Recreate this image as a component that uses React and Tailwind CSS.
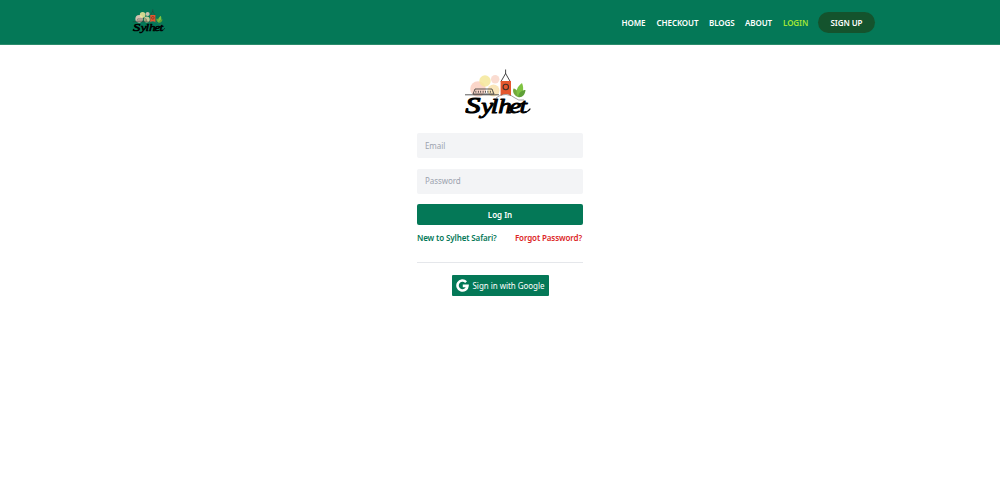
import React from "react";

function Logo({ className }) {
  return (
    <svg viewBox="0 0 66 53" className={className} role="img" aria-label="Sylhet">
      <circle cx="13" cy="20" r="7.8" fill="#f9cfc0" fillOpacity="0.85" />
      <circle cx="20" cy="12" r="5.7" fill="#f5e79a" fillOpacity="0.85" />
      <circle cx="30.2" cy="10.2" r="4.2" fill="#f9d3c6" fillOpacity="0.8" />
      <circle cx="28.5" cy="21.5" r="6" fill="#f8dfa8" fillOpacity="0.8" />
      <path d="M0 25.8H34M10 20H27L29 25H8Z" fill="none" stroke="#333" strokeWidth="0.8" />
      <path d="M10.5 22.7H27.5" stroke="#333" strokeWidth="2" strokeDasharray="0.8 1.6" />
      <path d="M36 12.5L40.6 4.5L45.2 12.5M40.6 0.5V5" fill="none" stroke="#333" strokeWidth="0.9" />
      <path d="M35.6 12H46V27Q40.8 23 35.6 27Z" fill="#e4572e" />
      <circle cx="40.8" cy="18" r="2.7" fill="#e4572e" stroke="#443028" strokeWidth="1.1" />
      <path d="M53 28C48 26 47.5 22 48.5 19.5C52 20 54 24 53 28Z" fill="#72a83c" />
      <path d="M53 28C50 22 52 18 57 14C59.5 20 58 26 53 28Z" fill="#7fc342" />
      <path d="M53 28C54 23 57 21 60.5 21C60 26 57 29 53 28Z" fill="#5fa037" />
      <path d="M31 29Q35 25 41 25.5T50 29T59 31" fill="none" stroke="#666" strokeWidth="0.6" />
      <g className="font-['Liberation_Serif',serif]" fontStyle="italic" fill="#000" stroke="#000" strokeLinejoin="round">
        <text transform="translate(0.5 44) scale(1.3 1)" fontSize="23" strokeWidth="1.2">S</text>
        <text transform="translate(0 44) scale(1.25 1)" x="13 20.6 26.6 35.4 43.6" fontSize="21.5" strokeWidth="1">ylhet</text>
        <path d="M59 43.4Q63 43 65 40" fill="none" strokeWidth="1.3" strokeLinecap="round" />
      </g>
    </svg>
  );
}

const links = [
  { label: "HOME", width: "w-[24.5px]" },
  { label: "CHECKOUT", width: "w-[42px]" },
  { label: "BLOGS", width: "w-[25.5px]" },
  { label: "ABOUT", width: "w-[27.5px]" },
];

export default function App() {
  return (
    <div className="min-h-[500px] bg-white font-['Noto_Sans',sans-serif] text-[8px] leading-3">
      <header className="flex h-[45px] items-center border-b border-[#2b8c6c] bg-[#047857] pl-[132px] pr-[125px]">
        <Logo className="h-[26px] w-[34px]" />
        <nav className="ml-auto flex items-center gap-[10.5px] whitespace-nowrap font-semibold tracking-[-0.08px] text-white">
          {links.map((link) => (
            <a key={link.label} className={`${link.width} pt-px`}>{link.label}</a>
          ))}
          <a className="w-[24.5px] pt-px text-[#a3e635]">LOGIN</a>
          <a className="flex h-[21px] w-[57px] items-center justify-center rounded-full bg-[#14532d] pt-px">SIGN UP</a>
        </nav>
      </header>
      <main className="mx-auto flex w-[166px] flex-col pt-6">
        <Logo className="-ml-[5px] h-[53px] w-[66px] self-center" />
        <form className="mt-[11px] flex flex-col">
          <input placeholder="Email" className="h-[25px] rounded-[2px] bg-[#f3f4f6] px-2 tracking-[-0.08px] placeholder:text-[#9ca3af]" />
          <input placeholder="Password" className="mt-[10.5px] h-[25px] rounded-[2px] bg-[#f3f4f6] px-2 pb-px tracking-[-0.08px] placeholder:text-[#9ca3af]" />
          <button type="button" className="mt-[10.5px] h-[21px] rounded-[2px] bg-[#047857] font-semibold text-white">Log In</button>
        </form>
        <div className="mt-[7px] flex justify-between whitespace-nowrap pr-px font-semibold tracking-[-0.12px]">
          <a className="text-[#047857]">New to Sylhet Safari?</a>
          <a className="text-[#dc2626]">Forgot Password?</a>
        </div>
        <hr className="mt-[18px] border-[#e5e7eb]" />
        <button type="button" className="mt-3 flex h-[21px] w-[97px] items-center gap-1 self-center whitespace-nowrap rounded-[1px] bg-[#047857] pl-1 tracking-[-0.04px] text-white">
          <svg viewBox="0 0 24 24" className="size-[13px] shrink-0" fill="none" stroke="currentColor" strokeWidth="4.8">
            <path d="M18.6 5.6A9.2 9.2 0 1 0 21.2 12.6H12.5" />
          </svg>
          Sign in with Google
        </button>
      </main>
    </div>
  );
}
